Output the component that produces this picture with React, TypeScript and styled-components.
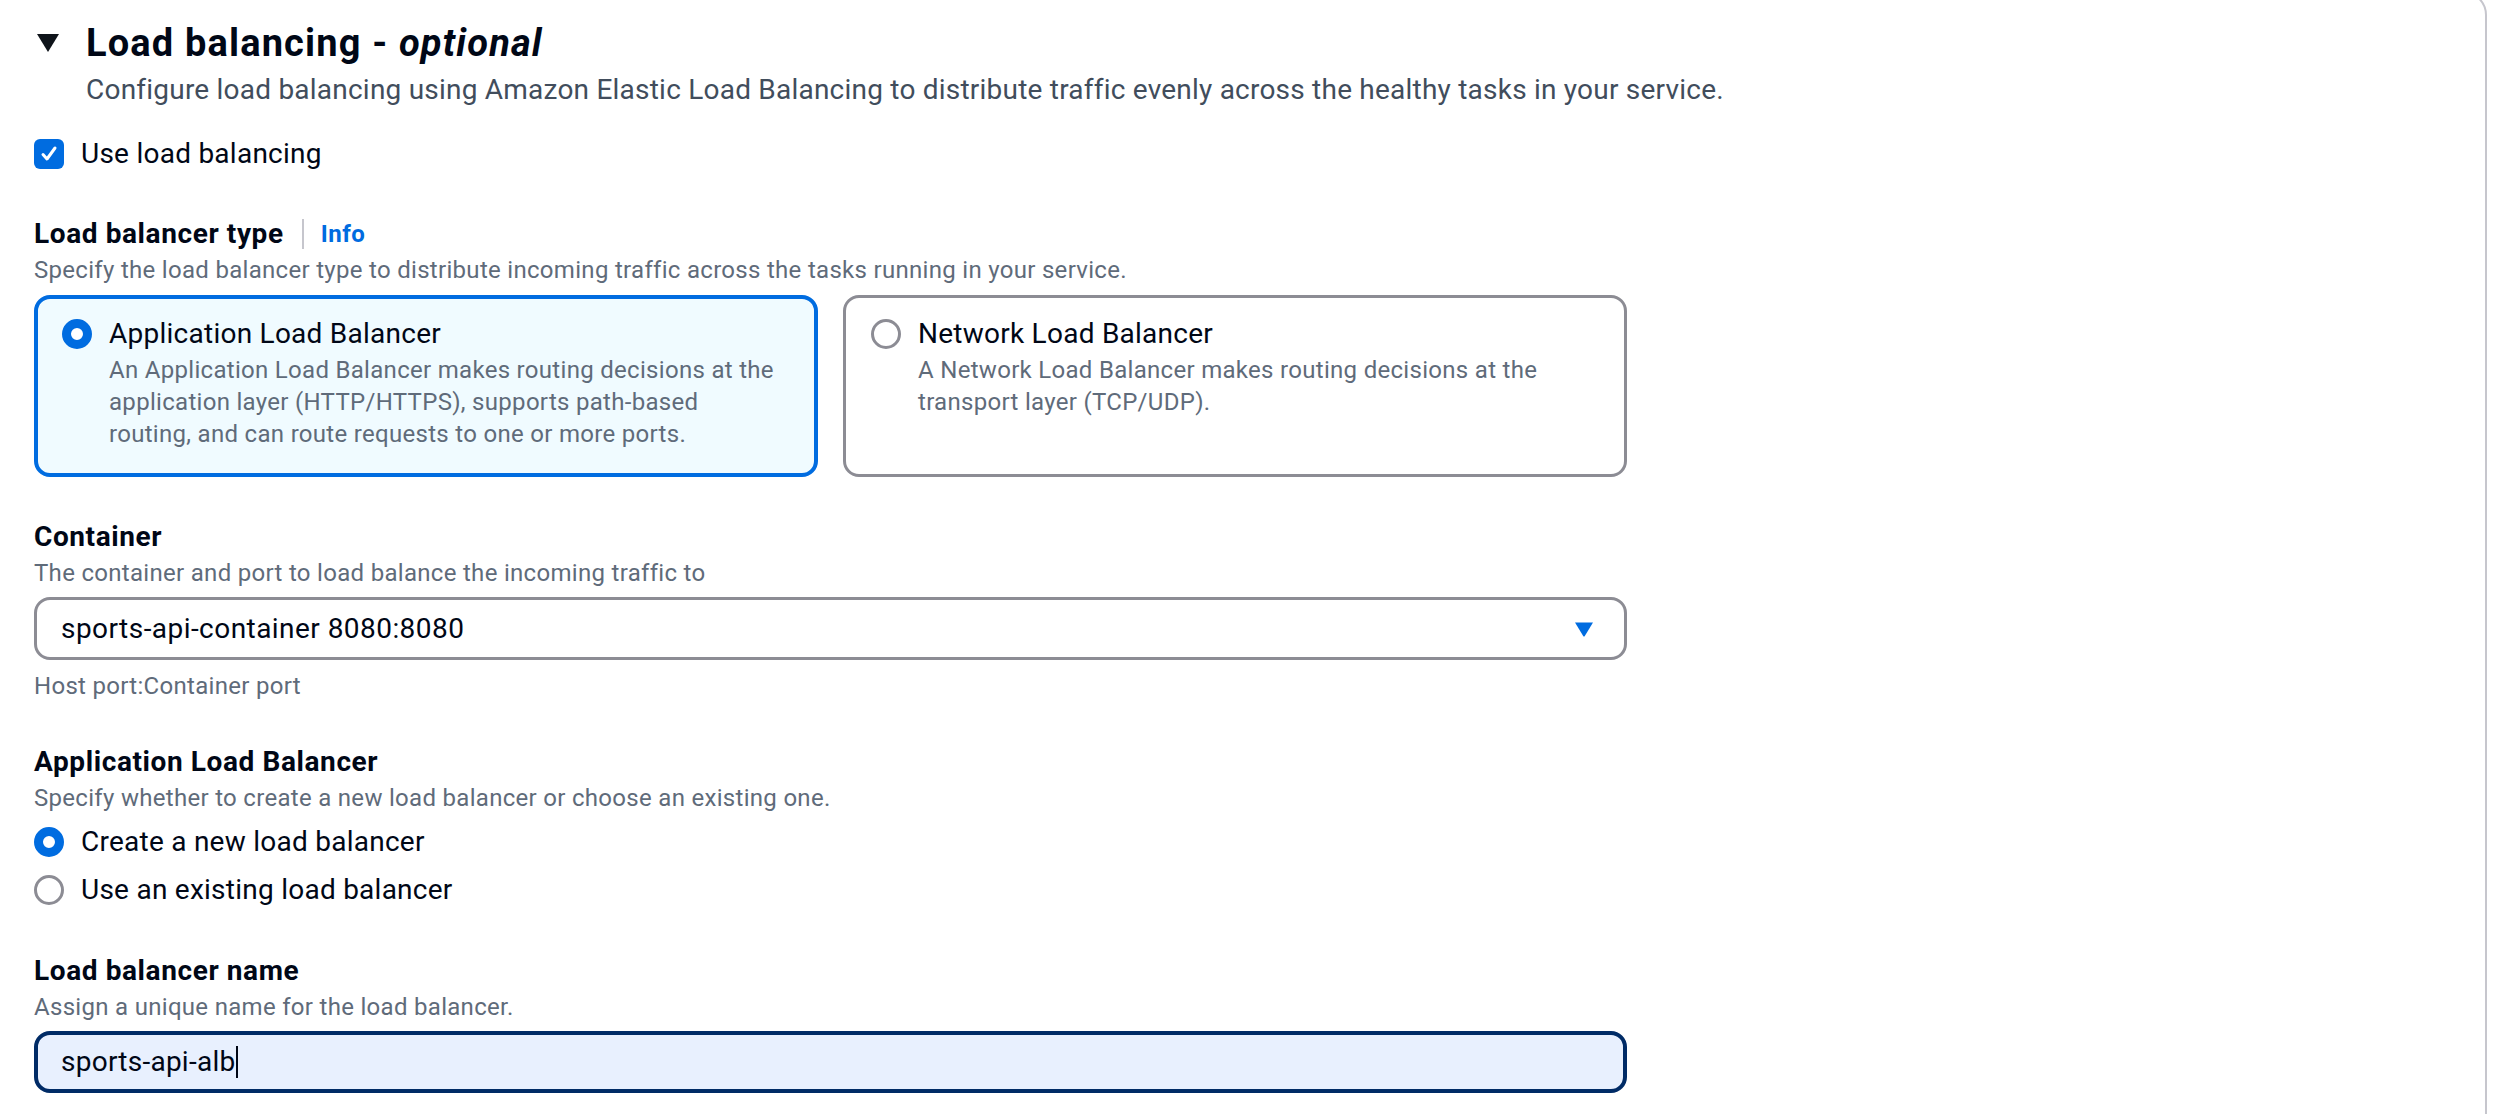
import React from 'react';
import styled, { createGlobalStyle } from 'styled-components';

const BLUE = '#006ce0';
const TEXT = '#000716';
const SUB = '#5f6b7a';
const FONT = 'Roboto, "Open Sans", Arial, sans-serif';

const GlobalStyle = createGlobalStyle`
  html, body { margin: 0; padding: 0; background: #ffffff; }
  body { font-family: ${FONT}; color: ${TEXT}; overflow: hidden; }
  * { box-sizing: border-box; }
`;

const Page = styled.div`
  width: 2503px;
  height: 1114px;
  overflow: hidden;
`;

const Container = styled.section`
  margin: -9px 16px 0 -12px;
  border: 2px solid #c6c6cd;
  border-radius: 24px;
  padding: 28px 0 60px 44px;
  min-height: 1220px;
`;

const ExpandHeader = styled.div`
  display: flex;
  align-items: center;
  height: 44px;
`;

const CaretIcon = styled.svg`
  width: 24px;
  height: 20px;
  margin-left: 2px;
  margin-right: 26px;
  flex: none;
`;

const Title = styled.h2`
  margin: 0;
  font-size: 38px;
  line-height: 44px;
  font-weight: 700;
  letter-spacing: 1.15px;
  color: ${TEXT};
  i { font-style: italic; }
`;

const HeaderDescription = styled.p`
  margin: 5px 0 0 52px;
  font-size: 28px;
  line-height: 40px;
  letter-spacing: 0.22px;
  color: #414d5c;
`;

const CheckboxRow = styled.label`
  display: flex;
  align-items: center;
  gap: 17px;
  height: 40px;
  margin-top: 24px;
  font-size: 28px;
  line-height: 40px;
  letter-spacing: 0.25px;
`;

const CheckboxBox = styled.span`
  width: 30px;
  height: 30px;
  border-radius: 6px;
  background: ${BLUE};
  display: flex;
  align-items: center;
  justify-content: center;
  flex: none;
`;

const Form = styled.div`
  display: flex;
  flex-direction: column;
  gap: 40px;
  margin-top: 40px;
  width: 1593px;
`;

const Field = styled.div`
  display: flex;
  flex-direction: column;
`;

const LabelRow = styled.div`
  display: flex;
  align-items: center;
  font-size: 28px;
  line-height: 40px;
  font-weight: 700;
  letter-spacing: 0.6px;
`;

const Separator = styled.span`
  width: 2px;
  height: 30px;
  background: #c6c6cd;
  margin: 0 17px 0 18px;
`;

const InfoLink = styled.a`
  font-size: 24px;
  font-weight: 700;
  letter-spacing: 0.5px;
  color: ${BLUE};
  text-decoration: none;
`;

const Description = styled.div`
  font-size: 24px;
  line-height: 32px;
  letter-spacing: 0.3px;
  color: ${SUB};
`;

const Tiles = styled.div`
  display: grid;
  grid-template-columns: 1fr 1fr;
  gap: 25px;
  margin-top: 9px;
`;

const Tile = styled.div<{ $selected?: boolean }>`
  display: flex;
  gap: 17px;
  height: 182px;
  border-radius: 16px;
  border: ${(p) => (p.$selected ? `4px solid ${BLUE}` : '3px solid #8c8c94')};
  background: ${(p) => (p.$selected ? '#f0fbff' : '#ffffff')};
  padding: ${(p) => (p.$selected ? '15px 20px 0 24px' : '16px 21px 0 25px')};
`;

const RadioSlot = styled.div`
  height: 40px;
  display: flex;
  align-items: center;
  flex: none;
`;

const RadioCircle = styled.span<{ $checked?: boolean }>`
  display: block;
  width: 30px;
  height: 30px;
  border-radius: 50%;
  background: #ffffff;
  border: ${(p) => (p.$checked ? `9px solid ${BLUE}` : '3px solid #8c8c94')};
  flex: none;
`;

const TileText = styled.div`
  display: flex;
  flex-direction: column;
`;

const TileTitle = styled.div`
  font-size: 28px;
  line-height: 40px;
  letter-spacing: 0.25px;
  color: ${TEXT};
`;

const SelectBox = styled.div`
  margin-top: 8px;
  height: 63px;
  border: 3px solid #8c8c94;
  border-radius: 16px;
  display: flex;
  align-items: center;
  justify-content: space-between;
  padding: 0 30px 0 24px;
  font-size: 28px;
  line-height: 40px;
  letter-spacing: 0.45px;
`;

const DropIcon = styled.svg`
  width: 20px;
  height: 16px;
  flex: none;
`;

const Constraint = styled(Description)`
  margin-top: 10px;
`;

const RadioGroup = styled.div`
  display: flex;
  flex-direction: column;
  gap: 8px;
  margin-top: 8px;
`;

const RadioRow = styled.label`
  display: flex;
  align-items: center;
  gap: 17px;
  height: 40px;
  font-size: 28px;
  line-height: 40px;
  letter-spacing: 0.25px;
`;

const NameField = styled(Field)`
  margin-top: 1px;
`;

const InputBox = styled.div`
  margin-top: 8px;
  height: 62px;
  border: 4px solid #002b66;
  border-radius: 16px;
  background: #e8f0fe;
  display: flex;
  align-items: center;
  padding: 0 23px;
  font-size: 28px;
  line-height: 40px;
  letter-spacing: 0.25px;
`;

const TextCaret = styled.span`
  display: inline-block;
  width: 2px;
  height: 32px;
  background: ${TEXT};
  margin-left: 1px;
`;

export default function App() {
  return (
    <Page>
      <GlobalStyle />
      <Container>
        <ExpandHeader>
          <CaretIcon viewBox="0 0 24 20">
            <path d="M1 1 H23 L12 19 Z" fill="#0f141a" />
          </CaretIcon>
          <Title>
            Load balancing - <i>optional</i>
          </Title>
        </ExpandHeader>
        <HeaderDescription>
          Configure load balancing using Amazon Elastic Load Balancing to distribute traffic evenly across the healthy tasks in your service.
        </HeaderDescription>
        <CheckboxRow>
          <CheckboxBox>
            <svg width="20" height="20" viewBox="0 0 20 20">
              <path d="M4 10.5 L8 15 L16 4" fill="none" stroke="#ffffff" strokeWidth="3" strokeLinecap="round" strokeLinejoin="round" />
            </svg>
          </CheckboxBox>
          Use load balancing
        </CheckboxRow>

        <Form>
          <Field>
            <LabelRow>
              Load balancer type
              <Separator />
              <InfoLink href="#">Info</InfoLink>
            </LabelRow>
            <Description>Specify the load balancer type to distribute incoming traffic across the tasks running in your service.</Description>
            <Tiles>
              <Tile $selected>
                <RadioSlot>
                  <RadioCircle $checked />
                </RadioSlot>
                <TileText>
                  <TileTitle>Application Load Balancer</TileTitle>
                  <Description>
                    An Application Load Balancer makes routing decisions at the
                    <br />
                    application layer (HTTP/HTTPS), supports path-based
                    <br />
                    routing, and can route requests to one or more ports.
                  </Description>
                </TileText>
              </Tile>
              <Tile>
                <RadioSlot>
                  <RadioCircle />
                </RadioSlot>
                <TileText>
                  <TileTitle>Network Load Balancer</TileTitle>
                  <Description>
                    A Network Load Balancer makes routing decisions at the
                    <br />
                    transport layer (TCP/UDP).
                  </Description>
                </TileText>
              </Tile>
            </Tiles>
          </Field>

          <Field>
            <LabelRow>Container</LabelRow>
            <Description>The container and port to load balance the incoming traffic to</Description>
            <SelectBox>
              <span>sports-api-container 8080:8080</span>
              <DropIcon viewBox="0 0 20 16">
                <path d="M1 1.5 H19 L10.8 15 Q10 16 9.2 15 Z" fill={BLUE} />
              </DropIcon>
            </SelectBox>
            <Constraint>Host port:Container port</Constraint>
          </Field>

          <Field>
            <LabelRow>Application Load Balancer</LabelRow>
            <Description>Specify whether to create a new load balancer or choose an existing one.</Description>
            <RadioGroup>
              <RadioRow>
                <RadioCircle $checked />
                Create a new load balancer
              </RadioRow>
              <RadioRow>
                <RadioCircle />
                Use an existing load balancer
              </RadioRow>
            </RadioGroup>
          </Field>

          <NameField>
            <LabelRow>Load balancer name</LabelRow>
            <Description>Assign a unique name for the load balancer.</Description>
            <InputBox>
              sports-api-alb
              <TextCaret />
            </InputBox>
          </NameField>
        </Form>
      </Container>
    </Page>
  );
}
